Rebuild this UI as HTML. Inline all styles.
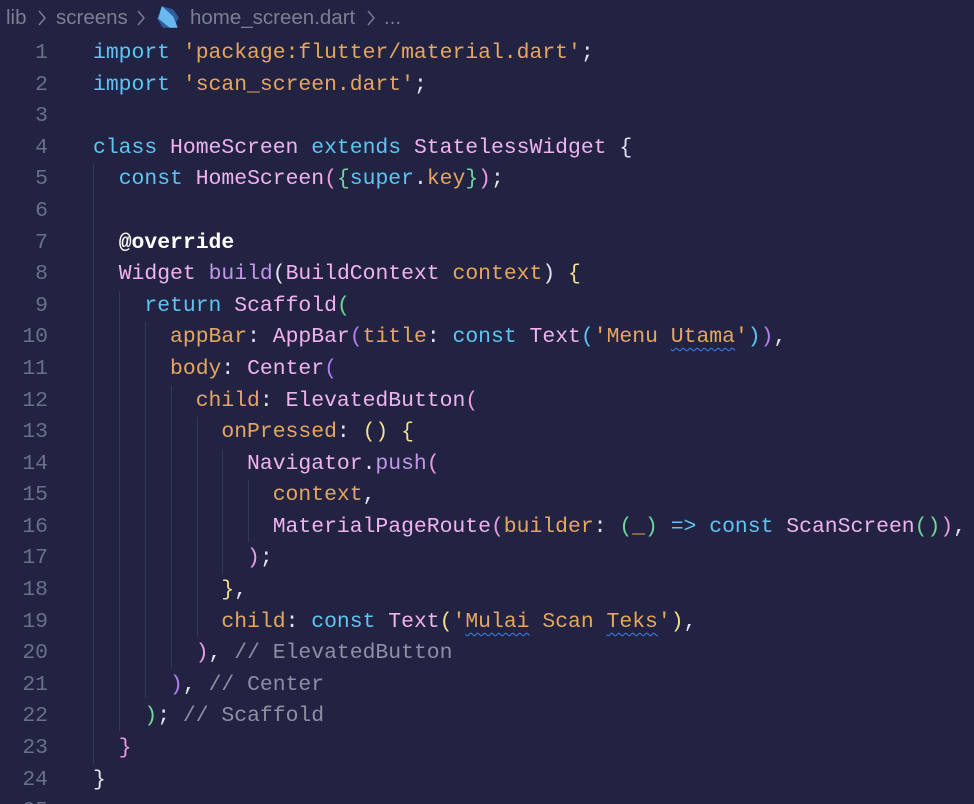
<!DOCTYPE html>
<html><head><meta charset="utf-8"><style>
html,body{margin:0;padding:0;background:#222343;width:974px;height:804px;overflow:hidden;}
body{font-family:"Liberation Mono",monospace;font-size:21.4px;color:#e4e4ee;position:relative;}
.bc{position:absolute;top:3px;font-family:"Liberation Sans",sans-serif;font-size:20.5px;color:#7c7e94;white-space:pre;line-height:30px;}
.ch{position:absolute;top:10px;}
.ln{position:absolute;left:0;width:48px;text-align:right;color:#6c6f88;height:32px;line-height:32px;}
.c{position:absolute;left:93px;white-space:pre;height:32px;line-height:32px;}
.g{position:absolute;width:1px;background:#34365a;}
.k{color:#5ec4f2}.t{color:#f0b3ee}.s{color:#e6a65e}.p{color:#e6a65e}.m{color:#c396e8}.cm{color:#8d8fa4}
.w{color:#ffffff;font-weight:bold}
.y{color:#f4df8a}.pk{color:#ee9ae0}.gr{color:#6fd69a}.pu{color:#b37ef0}.bl{color:#5ec4f2}
.sq{text-decoration:underline wavy #3b82f6;text-decoration-thickness:1px;text-underline-offset:5px}
</style></head><body>
<div class="bc" style="left:6px">lib</div>
<svg class="ch" style="left:37px" width="10" height="16" viewBox="0 0 10 16"><polyline points="2,1 8,8 2,15" fill="none" stroke="#7c7e94" stroke-width="1.4"/></svg>
<div class="bc" style="left:56px">screens</div>
<svg class="ch" style="left:136px" width="10" height="16" viewBox="0 0 10 16"><polyline points="2,1 8,8 2,15" fill="none" stroke="#7c7e94" stroke-width="1.4"/></svg>
<svg style="position:absolute;left:155px;top:5px" width="25" height="25" viewBox="0 0 22 22"><polygon points="6,1 16,4 21,11 16,20 7,20 2,12" fill="#2d5fa0"/><polygon points="6,1 16,10 20,20 13,20 3,12" fill="#6ab8f0"/></svg>
<div class="bc" style="left:190px">home_screen.dart</div>
<svg class="ch" style="left:366px" width="10" height="16" viewBox="0 0 10 16"><polyline points="2,1 8,8 2,15" fill="none" stroke="#7c7e94" stroke-width="1.4"/></svg>
<div class="bc" style="left:384px">...</div>

<div class="g" style="left:93px;top:164px;height:600px"></div>
<div class="g" style="left:119px;top:291px;height:440px"></div>
<div class="g" style="left:145px;top:322px;height:376px"></div>
<div class="g" style="left:171px;top:386px;height:282px"></div>
<div class="g" style="left:197px;top:417px;height:220px"></div>
<div class="g" style="left:222px;top:449px;height:126px"></div>
<div class="g" style="left:248px;top:480px;height:62px"></div>

<div class="ln" style="top:37px">1</div><div class="c" style="top:37px"><span class="k">import</span> <span class="s">'package:flutter/material.dart'</span>;</div>
<div class="ln" style="top:69px">2</div><div class="c" style="top:69px"><span class="k">import</span> <span class="s">'scan_screen.dart'</span>;</div>
<div class="ln" style="top:100px">3</div>
<div class="ln" style="top:132px">4</div><div class="c" style="top:132px"><span class="k">class</span> <span class="t">HomeScreen</span> <span class="k">extends</span> <span class="t">StatelessWidget</span> {</div>
<div class="ln" style="top:163px">5</div><div class="c" style="top:163px">  <span class="k">const</span> <span class="t">HomeScreen</span><span class="pk">(</span><span class="gr">{</span><span class="k">super</span>.<span class="p">key</span><span class="gr">}</span><span class="pk">)</span>;</div>
<div class="ln" style="top:195px">6</div>
<div class="ln" style="top:227px">7</div><div class="c" style="top:227px">  <span class="w">@override</span></div>
<div class="ln" style="top:258px">8</div><div class="c" style="top:258px">  <span class="t">Widget</span> <span class="m">build</span>(<span class="t">BuildContext</span> <span class="p">context</span>) <span class="y">{</span></div>
<div class="ln" style="top:290px">9</div><div class="c" style="top:290px">    <span class="k">return</span> <span class="t">Scaffold</span><span class="gr">(</span></div>
<div class="ln" style="top:321px">10</div><div class="c" style="top:321px">      <span class="p">appBar</span>: <span class="t">AppBar</span><span class="pu">(</span><span class="p">title</span>: <span class="k">const</span> <span class="t">Text</span><span class="bl">(</span><span class="s">'Menu <span class="sq">Utama</span>'</span><span class="bl">)</span><span class="pu">)</span>,</div>
<div class="ln" style="top:353px">11</div><div class="c" style="top:353px">      <span class="p">body</span>: <span class="t">Center</span><span class="pu">(</span></div>
<div class="ln" style="top:385px">12</div><div class="c" style="top:385px">        <span class="p">child</span>: <span class="t">ElevatedButton</span><span class="pk">(</span></div>
<div class="ln" style="top:416px">13</div><div class="c" style="top:416px">          <span class="p">onPressed</span>: <span class="y">()</span> <span class="y">{</span></div>
<div class="ln" style="top:448px">14</div><div class="c" style="top:448px">            <span class="t">Navigator</span>.<span class="m">push</span><span class="pk">(</span></div>
<div class="ln" style="top:479px">15</div><div class="c" style="top:479px">              <span class="p">context</span>,</div>
<div class="ln" style="top:511px">16</div><div class="c" style="top:511px">              <span class="t">MaterialPageRoute</span><span class="pk">(</span><span class="p">builder</span>: <span class="gr">(</span><span class="p">_</span><span class="gr">)</span> <span class="bl">=&gt;</span> <span class="k">const</span> <span class="t">ScanScreen</span><span class="gr">()</span><span class="pk">)</span>,</div>
<div class="ln" style="top:542px">17</div><div class="c" style="top:542px">            <span class="pk">)</span>;</div>
<div class="ln" style="top:574px">18</div><div class="c" style="top:574px">          <span class="y">}</span>,</div>
<div class="ln" style="top:606px">19</div><div class="c" style="top:606px">          <span class="p">child</span>: <span class="k">const</span> <span class="t">Text</span><span class="y">(</span><span class="s">'<span class="sq">Mulai</span> Scan <span class="sq">Teks</span>'</span><span class="y">)</span>,</div>
<div class="ln" style="top:637px">20</div><div class="c" style="top:637px">        <span class="pk">)</span>, <span class="cm">// ElevatedButton</span></div>
<div class="ln" style="top:669px">21</div><div class="c" style="top:669px">      <span class="pu">)</span>, <span class="cm">// Center</span></div>
<div class="ln" style="top:700px">22</div><div class="c" style="top:700px">    <span class="gr">)</span>; <span class="cm">// Scaffold</span></div>
<div class="ln" style="top:732px">23</div><div class="c" style="top:732px">  <span class="pk">}</span></div>
<div class="ln" style="top:764px">24</div><div class="c" style="top:764px">}</div>
<div class="ln" style="top:795px">25</div>
</body></html>
